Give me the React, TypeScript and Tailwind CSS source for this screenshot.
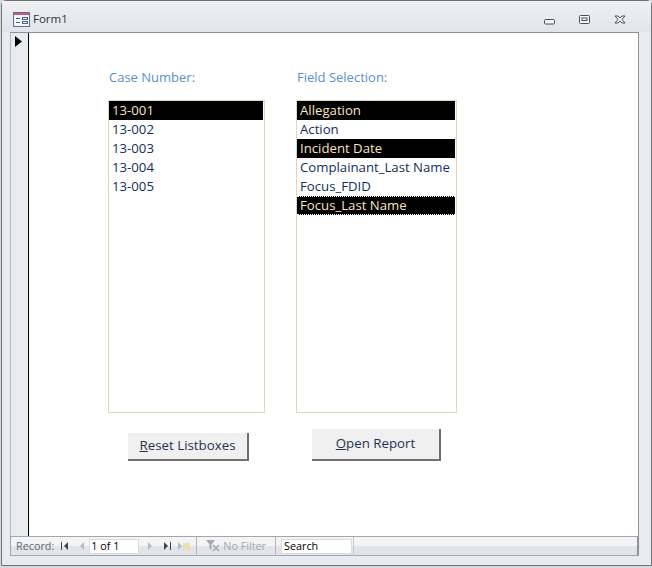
const font = { fontFamily: '"Open Sans", "Noto Sans", sans-serif' };

const caseNumbers = [
  { label: "13-001", selected: true },
  { label: "13-002" },
  { label: "13-003" },
  { label: "13-004" },
  { label: "13-005" },
];

const fields = [
  { label: "Allegation", selected: true },
  { label: "Action" },
  { label: "Incident Date", selected: true },
  { label: "Complainant_Last Name" },
  { label: "Focus_FDID" },
  { label: "Focus_Last Name", selected: true, focus: true },
];

type Row = { label: string; selected?: boolean; focus?: boolean };

function ListBox({ rows, width }: { rows: Row[]; width: string }) {
  return (
    <div className={`${width} h-[313px] border border-[#ded8c0] bg-white`}>
      {rows.map((r) => (
        <div
          key={r.label}
          className={`h-[19px] mr-px pl-[3px] text-[13.2px] whitespace-nowrap ${
            r.selected ? "bg-black text-[#fbe3c0]" : "text-[#10305a]"
          } ${r.focus ? "border-y border-dotted border-white leading-[16px]" : "leading-[19px]"}`}
        >
          {r.label}
        </div>
      ))}
    </div>
  );
}

function Button({ mnemonic, rest, className }: { mnemonic: string; rest: string; className: string }) {
  return (
    <div
      className={`flex items-center justify-center bg-[#f0f0f0] border-r-2 border-b-2 border-[#6f6f6f] text-[13.3px] text-[#1e3350] ${className}`}
    >
      <span className="underline">{mnemonic}</span>
      {rest}
    </div>
  );
}

function Tri({ dir, color }: { dir: "l" | "r"; color: string }) {
  return (
    <svg width="5" height="8" viewBox="0 0 5 8" className="shrink-0">
      <path d={dir === "l" ? "M5 0V8L1 4Z" : "M0 0V8L4 4Z"} fill={color} />
    </svg>
  );
}

export default function App() {
  return (
    <div style={font} className="w-[652px] h-[568px] bg-[#d5d9dd] overflow-hidden">
      <div className="w-[651px] h-[566px] ml-px rounded-t-[5px] border border-[#6e7278] bg-[#e8ebef] flex flex-col">
        {/* title */}
        <div className="h-[31px] shrink-0 flex items-center pt-[5px] bg-gradient-to-b from-[#eef0f2] to-[#e2e5e8]">
          <svg width="17" height="15" viewBox="0 0 17 15" className="ml-[11px]">
            <rect x="0.5" y="0.5" width="16" height="14" fill="#f4f6fa" stroke="#5b6f92" />
            <rect x="1" y="1" width="15" height="2" fill="#d0567a" />
            <path d="M3 6.5H7M3 10.5H7" stroke="#4a5f85" />
            <rect x="9.5" y="5.5" width="5" height="2" fill="none" stroke="#4a5f85" />
            <rect x="9.5" y="9.5" width="5" height="2" fill="none" stroke="#4a5f85" />
          </svg>
          <span className="ml-[3px] text-[11.5px] text-[#2c3440]">Form1</span>
          <div className="ml-auto flex items-center">
            <svg width="11" height="6" viewBox="0 0 11 6" className="mt-[6px]">
              <rect x="0.5" y="0.5" width="10" height="4.5" rx="1" fill="#f4f5f6" stroke="#49505a" />
            </svg>
            <svg width="11" height="9" viewBox="0 0 11 9" className="ml-[24px]">
              <rect x="0.5" y="0.5" width="10" height="8" rx="1" fill="#f4f5f6" stroke="#49505a" />
              <rect x="3" y="3" width="5" height="2.5" fill="none" stroke="#49505a" />
            </svg>
            <svg width="12" height="9" viewBox="0 0 12 9" className="ml-[24px] mr-[25px]">
              <path d="M1 1H4L6 3L8 1H11L8 4.5L11 8H8L6 6L4 8H1L4 4.5Z" fill="#f4f5f6" stroke="#49505a" />
            </svg>
          </div>
        </div>

        {/* client area */}
        <div className="flex-1 flex flex-col ml-[8px] mr-[12px] mb-[9px] border-t border-[#8d9198] min-h-0">
          <div className="flex-1 flex min-h-0">
            <div className="w-[19px] shrink-0 bg-[#e8ebef] border-l border-[#b5b9bf] border-r border-r-black flex justify-center pt-[3px] pr-[2px]">
              <svg width="7" height="11" viewBox="0 0 7 11">
                <path d="M0 0L7 5.5L0 11Z" fill="#000" />
              </svg>
            </div>
            <div className="flex-1 bg-white border-r border-[#8d9198] pl-[79px] pt-[35px] flex gap-[31px]">
              <div className="flex flex-col w-[157px]">
                <div className="h-[18px] pl-px text-[13px] leading-[18px] text-[#5b8fd0]">Case Number:</div>
                <div className="mt-[14px]">
                  <ListBox rows={caseNumbers} width="w-[157px]" />
                </div>
                <Button mnemonic="R" rest="eset Listboxes" className="mt-[20px] ml-[20px] w-[121px] h-[28px]" />
              </div>
              <div className="flex flex-col w-[161px]">
                <div className="h-[18px] pl-px text-[13px] leading-[18px] text-[#5b8fd0]">Field Selection:</div>
                <div className="mt-[14px]">
                  <ListBox rows={fields} width="w-[161px]" />
                </div>
                <Button mnemonic="O" rest="pen Report" className="mt-[16px] ml-[16px] w-[129px] h-[32px]" />
              </div>
            </div>
          </div>

          {/* record nav */}
          <div className="h-[20px] shrink-0 border border-[#a3a6ac] border-r-2 border-r-[#8d9198] bg-gradient-to-b from-[#f3f4f6] from-50% to-[#e2e4e8] to-50% flex items-center text-[10.8px]">
            <span className="ml-[5px] text-[#5a6678]">Record:</span>
            <div className="ml-[7px] flex items-center gap-px">
              <div className="w-px h-[8px] bg-[#444]" />
              <Tri dir="l" color="#444" />
            </div>
            <div className="ml-[11px]">
              <Tri dir="l" color="#b5b8bd" />
            </div>
            <div className="ml-[5px] w-[50px] h-[15px] bg-white border border-[#d9dce0] text-black leading-[12px] pl-px">1 of 1</div>
            <div className="ml-[9px]">
              <Tri dir="r" color="#b5b8bd" />
            </div>
            <div className="ml-[11px] flex items-center gap-px">
              <Tri dir="r" color="#444" />
              <div className="w-px h-[8px] bg-[#444]" />
            </div>
            <div className="ml-[7px] flex items-center">
              <Tri dir="r" color="#b5b8bd" />
              <div className="w-[7px] h-[7px] bg-[#e9e2b0]" />
            </div>
            <div className="ml-[6px] w-px h-[19px] bg-[#b5b8bd]" />
            <svg width="14" height="12" viewBox="0 0 14 12" className="ml-[9px]">
              <path d="M0 0H9L5.5 4.5V10L3.5 8.5V4.5Z" fill="#a5a8ad" />
              <path d="M7 5L13 11M13 5L7 11" stroke="#a5a8ad" strokeWidth="1.5" />
            </svg>
            <span className="ml-[3px] text-[#a3a7ac]">No Filter</span>
            <div className="ml-[9px] w-px h-[19px] bg-[#b5b8bd]" />
            <div className="ml-[5px] w-[71px] h-[15px] bg-white border border-[#d9dce0] text-black leading-[12px] pl-[2px]">Search</div>
            <div className="ml-[1px] w-px h-[19px] bg-[#c5c8cc]" />
          </div>
        </div>
      </div>
    </div>
  );
}
